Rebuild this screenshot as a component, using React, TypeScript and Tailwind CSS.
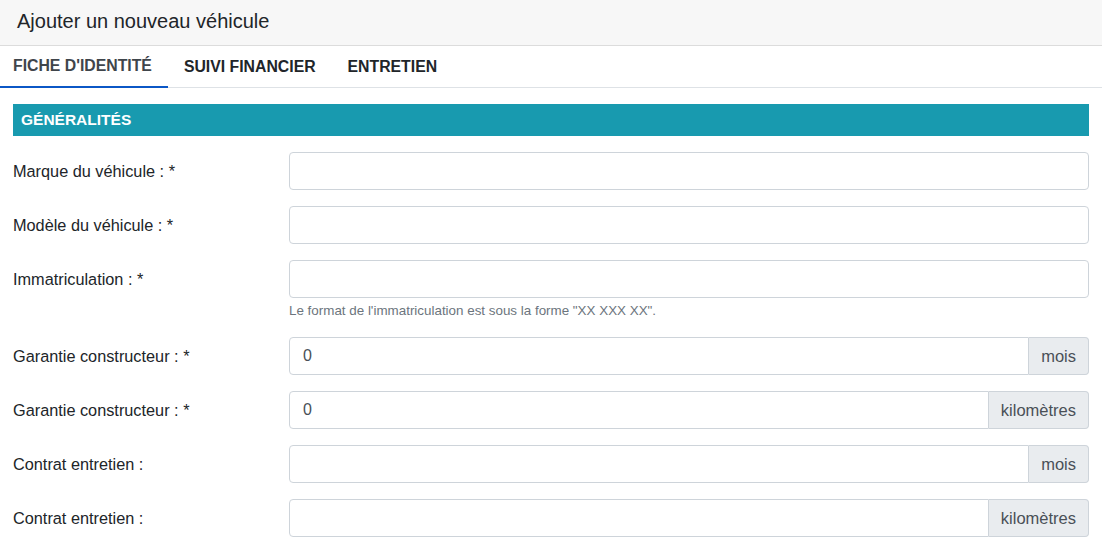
import React from "react";

type Row = { label: string; value?: string; addon?: string; help?: string };

const rows: Row[] = [
  { label: "Marque du véhicule : *" },
  { label: "Modèle du véhicule : *" },
  { label: "Immatriculation : *", help: "Le format de l'immatriculation est sous la forme \"XX XXX XX\"." },
  { label: "Garantie constructeur : *", value: "0", addon: "mois" },
  { label: "Garantie constructeur : *", value: "0", addon: "kilomètres" },
  { label: "Contrat entretien :", addon: "mois" },
  { label: "Contrat entretien :", addon: "kilomètres" },
];

export default function App() {
  return (
    <div className="w-[1102px] h-[551px] overflow-hidden bg-white text-[#212529]" style={{ fontFamily: '"Liberation Sans", Arial, sans-serif' }}>
      <div className="h-[46px] bg-[#f7f7f7] border-b border-[#dcdcdc] flex items-center px-[17px]">
        <h1 className="text-[20px] leading-none text-[#212529] -mt-[4px]">Ajouter un nouveau véhicule</h1>
      </div>
      <div className="h-[42px] flex border-b border-[#dee2e6]">
        <div className="pl-[13px] pr-[16px] flex items-center border-b-2 border-[#0b57c6] -mb-px text-[15.8px] font-bold text-[#3f454b] uppercase">FICHE D'IDENTITÉ</div>
        <div className="px-[16px] flex items-center text-[15.8px] font-bold text-[#212529] uppercase">SUIVI FINANCIER</div>
        <div className="px-[16px] flex items-center text-[15.8px] font-bold text-[#212529] uppercase">ENTRETIEN</div>
      </div>
      <div className="px-[13px] pt-[16px] w-[1102px]">
        <div className="h-[32px] bg-[#189aaf] text-white font-bold text-[15.5px] flex items-center px-[8px] w-[1076px]">GÉNÉRALITÉS</div>
        <div className="flex flex-col gap-[16px] pt-[16px]">
          {rows.map((r, i) => (
            <div key={i} className="flex">
              <div className="w-[276px] shrink-0 h-[38px] flex items-center text-[16.3px] text-[#212529]">{r.label}</div>
              <div className="w-[800px]">
                <div className="flex h-[38px]">
                  <div className={`flex-1 border border-[#ced4da] bg-white flex items-center px-[13px] text-[16px] text-[#495057] ${r.addon ? "rounded-l-[4px]" : "rounded-[4px]"}`}>
                    {r.value}
                  </div>
                  {r.addon && (
                    <div className="border border-l-0 border-[#ced4da] bg-[#e9ecef] rounded-r-[4px] flex items-center px-[12px] text-[16.5px] text-[#495057]">
                      {r.addon}
                    </div>
                  )}
                </div>
                {r.help && <div className="text-[13.4px] text-[#6c757d] mt-[4px] mb-[2px] leading-[17px]">{r.help}</div>}
              </div>
            </div>
          ))}
        </div>
      </div>
    </div>
  );
}
